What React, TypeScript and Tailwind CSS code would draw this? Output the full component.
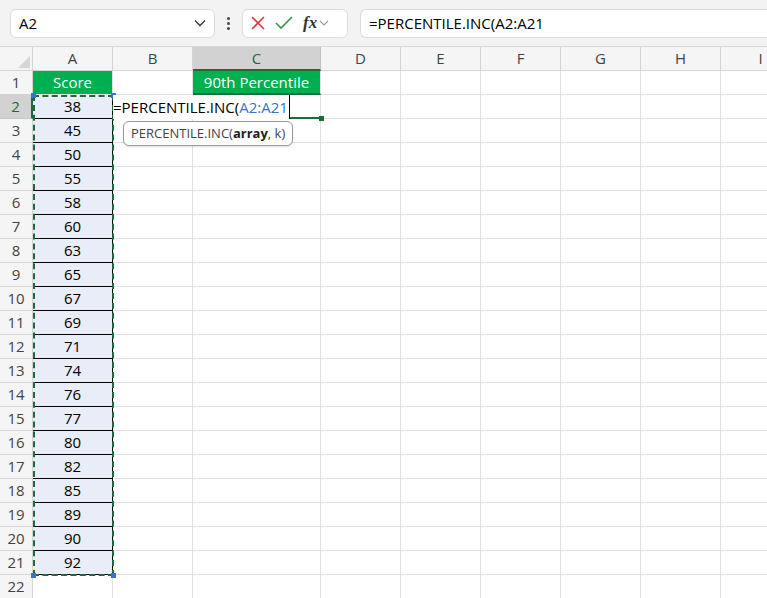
const cols = [
  { k: "A", w: 80 },
  { k: "B", w: 80 },
  { k: "C", w: 128 },
  { k: "D", w: 80 },
  { k: "E", w: 80 },
  { k: "F", w: 80 },
  { k: "G", w: 80 },
  { k: "H", w: 80 },
  { k: "I", w: 80 },
];
const scores = [38, 45, 50, 55, 58, 60, 63, 65, 67, 69, 71, 74, 76, 77, 80, 82, 85, 89, 90, 92];
const font = { fontFamily: "'Segoe UI', 'Open Sans', 'Liberation Sans', sans-serif" };

function Cell({ r, c, w }: { r: number; c: string; w: number }) {
  let cls = "h-6 shrink-0 border-r border-b border-[#e1e1e1] flex items-center justify-center text-[15px] text-black";
  let content: React.ReactNode = null;
  if (r === 1 && c === "A") {
    cls = "h-6 shrink-0 border-r border-b border-[#e1e1e1] flex items-center justify-center text-[15px] bg-[#00b050] text-white";
    content = "Score";
  } else if (r === 1 && c === "C") {
    cls = "h-6 shrink-0 border-r border-b border-[#e1e1e1] flex items-center justify-center text-[15px] bg-[#00b050] text-white border-b-2 border-b-[#1d6b3d]";
    content = "90th Percentile";
  } else if (r >= 2 && r <= 21 && c === "A") {
    cls = "h-6 shrink-0 border-r border-b border-black flex items-center justify-center text-[15px] bg-[#e8edf7] text-black";
    content = scores[r - 2];
  } else if (r === 2 && c === "C") {
    cls = "h-6 shrink-0 border-r border-b-2 border-r-[#e1e1e1] border-b-[#1d6b3d]";
  }
  return (
    <div className={cls} style={{ width: w }}>
      {content}
    </div>
  );
}

export default function App() {
  return (
    <div className="w-[767px] h-[598px] overflow-hidden bg-white relative" style={font}>
      <div className="h-[47px] bg-[#f3f3f3] flex items-center gap-3 pl-[10px] border-b border-[#d8d8d8]">
        <div className="w-[205px] h-[29px] bg-white rounded-md border border-[#dcdcdc] flex items-center justify-between px-2 text-[15px] text-black">
          <span>A2</span>
          <svg width="12" height="8" viewBox="0 0 12 8"><path d="M1 1.5l5 5 5-5" stroke="#333" strokeWidth="1.3" fill="none" /></svg>
        </div>
        <div className="flex flex-col gap-[2px]">
          <span className="w-[3px] h-[3px] bg-[#444] rounded-full" />
          <span className="w-[3px] h-[3px] bg-[#444] rounded-full" />
          <span className="w-[3px] h-[3px] bg-[#444] rounded-full" />
        </div>
        <div className="w-[106px] h-[29px] bg-white rounded-md border border-[#dcdcdc] flex items-center gap-[10px] px-2">
          <svg width="14" height="14" viewBox="0 0 14 14"><path d="M1 1l12 12M13 1L1 13" stroke="#e0383e" strokeWidth="1.6" /></svg>
          <svg width="18" height="14" viewBox="0 0 18 14"><path d="M1 7l5 5L17 1" stroke="#2e9a49" strokeWidth="1.6" fill="none" /></svg>
          <span className="flex items-center gap-[2px]">
            <span className="italic text-[17px] text-[#333]" style={{ fontFamily: "'Liberation Serif', serif" }}><b>fx</b></span>
            <svg width="10" height="6" viewBox="0 0 10 6"><path d="M1 1l4 4 4-4" stroke="#999" strokeWidth="1.1" fill="none" /></svg>
          </span>
        </div>
        <div className="flex-1 h-[29px] bg-white rounded-l-md border border-r-0 border-[#dcdcdc] flex items-center px-2 text-[15px] text-black">
          =PERCENTILE.INC(A2:A21
        </div>
      </div>
      <div className="flex h-6">
        <div className="w-[33px] h-6 shrink-0 bg-[#f5f5f5] border-r border-b border-[#d4d4d4] relative">
          <svg className="absolute right-[2px] bottom-[2px]" width="12" height="12" viewBox="0 0 12 12"><path d="M12 0v12H0z" fill="#d6d6d6" /></svg>
        </div>
        {cols.map((c) => (
          <div
            key={c.k}
            style={{ width: c.w }}
            className={
              c.k === "C"
                ? "h-6 shrink-0 bg-[#d2d2d2] border-r border-b-2 border-r-[#c0c0c0] border-b-[#1d6b3d] flex items-center justify-center text-[15px] text-[#1d6b3d]"
                : "h-6 shrink-0 bg-[#f5f5f5] border-r border-b border-[#d4d4d4] flex items-center justify-center text-[15px] text-[#444]"
            }
          >
            {c.k}
          </div>
        ))}
      </div>
      {Array.from({ length: 22 }, (_, i) => i + 1).map((r) => (
        <div key={r} className="flex">
          <div
            className={
              r === 2
                ? "w-[33px] h-6 shrink-0 bg-[#d2d2d2] border-r-2 border-b border-r-[#1d6b3d] border-b-[#c8c8c8] flex items-center justify-center text-[15px] text-[#1d6b3d]"
                : "w-[33px] h-6 shrink-0 bg-[#f5f5f5] border-r border-b border-[#d4d4d4] flex items-center justify-center text-[15px] text-[#444]"
            }
          >
            {r}
          </div>
          {cols.map((c) => (
            <Cell key={c.k} r={r} c={c.k} w={c.w} />
          ))}
        </div>
      ))}
      {/* copy/reference marquee around A2:A21 */}
      <div className="absolute left-[33px] top-[95px] w-[81px] h-[481px] border-2 border-dashed border-[#1d6b3d] pointer-events-none" />
      <div className="absolute left-[31px] top-[93px] w-[5px] h-[5px] bg-[#3b73c9]" />
      <div className="absolute left-[111px] top-[93px] w-[5px] h-[5px] bg-[#3b73c9]" />
      <div className="absolute left-[31px] top-[573px] w-[5px] h-[5px] bg-[#3b73c9]" />
      <div className="absolute left-[111px] top-[573px] w-[5px] h-[5px] bg-[#3b73c9]" />
      {/* in-cell edit text */}
      <div className="absolute left-[113px] top-[95px] h-6 flex items-center bg-white text-[15px] text-black pr-[1px] border-r border-black">
        =PERCENTILE.INC(<span className="text-[#3b73c9]">A2:A21</span>
      </div>
      <div className="absolute left-[319px] top-[116px] w-[5px] h-[5px] bg-[#1d6b3d]" />
      {/* function tooltip */}
      <div className="absolute left-[123px] top-[121px] h-[25px] px-[7px] bg-white border border-[#9a9a9a] rounded-md flex items-center text-[13px] text-[#444] shadow-sm">
        PERCENTILE.INC(<b className="text-[#222]">array</b>, k)
      </div>
    </div>
  );
}
